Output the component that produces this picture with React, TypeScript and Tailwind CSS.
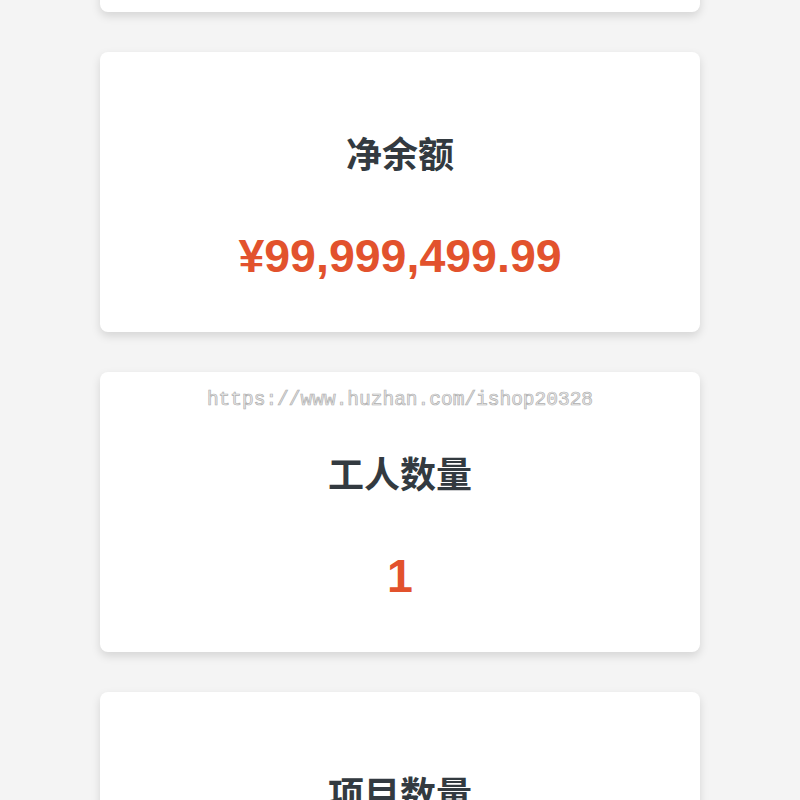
import React from "react";

type Stat = { label: string; value: string };

const stats: Stat[] = [
  { label: "总收入", value: "¥100,000,000.00" },
  { label: "净余额", value: "¥99,999,499.99" },
  { label: "工人数量", value: "1" },
  { label: "项目数量", value: "1" },
];

function StatCard({ label, value }: Stat) {
  return (
    <div className="flex h-[280px] w-[600px] flex-col items-center rounded-lg bg-white pt-[84px] shadow-[0_4px_10px_rgba(0,0,0,0.13)]">
      <div
        className="h-[40px] text-[36px] font-bold leading-[40px] text-[#333a40]"
        style={{ fontFamily: '"Liberation Sans", "Noto Sans CJK SC", sans-serif' }}
      >
        {label}
      </div>
      <div
        className="mt-[56px] h-[48px] text-[46.5px] font-bold leading-[48px] text-[#e2522d]"
        style={{ fontFamily: '"Liberation Sans", "Noto Sans CJK SC", sans-serif' }}
      >
        {value}
      </div>
    </div>
  );
}

export default function App() {
  return (
    <div className="relative h-[800px] w-[800px] overflow-hidden bg-[#f4f4f4]">
      <div className="mt-[-268px] flex flex-col items-center gap-[40px]">
        {stats.map((s) => (
          <StatCard key={s.label} {...s} />
        ))}
      </div>
      <div
        className="pointer-events-none absolute left-0 right-0 top-[388px] text-center text-[19.5px] leading-[24px] text-[#ececec] [-webkit-text-stroke:0.7px_#b0b0b0]"
        style={{ fontFamily: '"Liberation Mono", monospace' }}
      >
        https://www.huzhan.com/ishop20328
      </div>
    </div>
  );
}
